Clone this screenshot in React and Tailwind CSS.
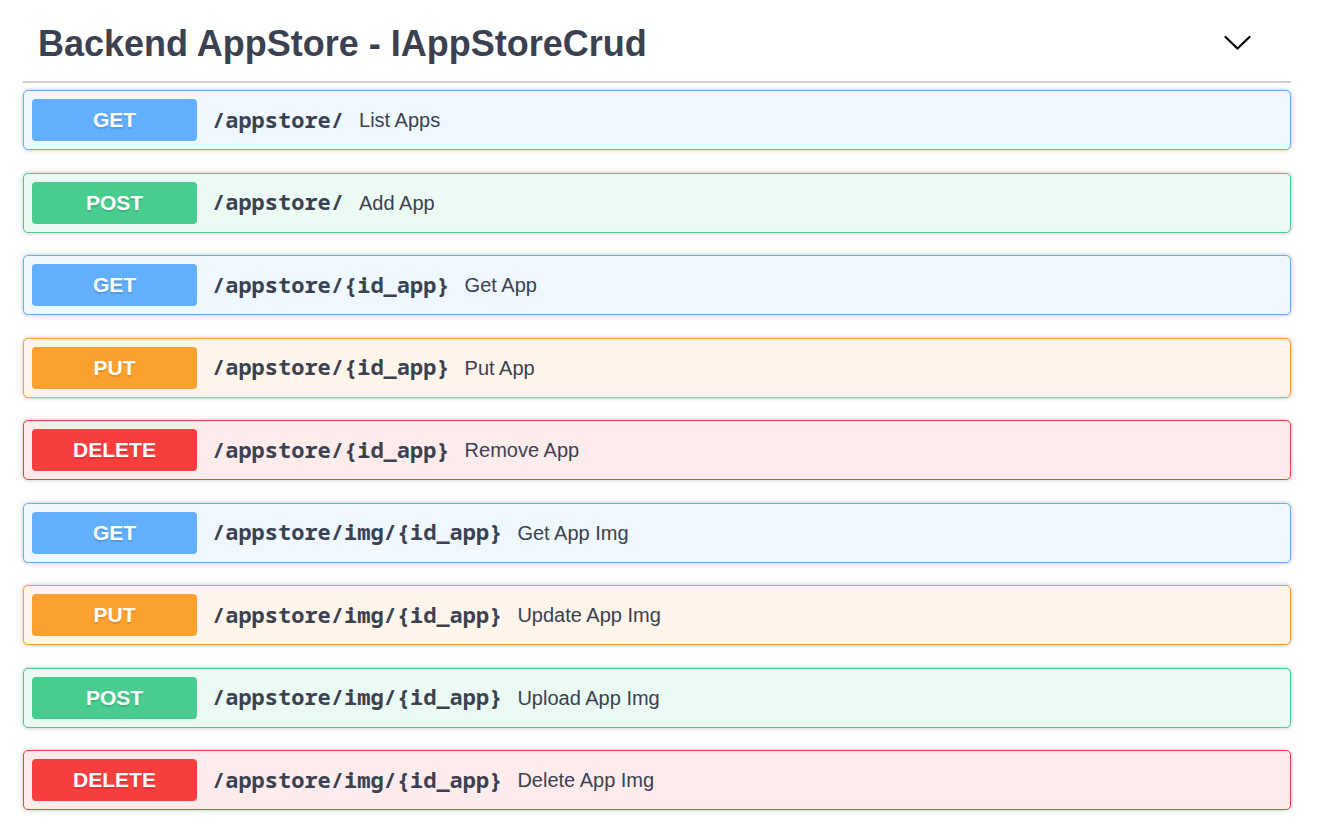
const METHODS = {
  GET: { row: "border-[#61affe] bg-[#eff7ff]", badge: "bg-[#61affe]" },
  POST: { row: "border-[#49cc90] bg-[#ebfaf3]", badge: "bg-[#49cc90]" },
  PUT: { row: "border-[#fca130] bg-[#fff5ea]", badge: "bg-[#fca130]" },
  DELETE: { row: "border-[#f93e3e] bg-[#feebeb]", badge: "bg-[#f93e3e]" },
};

const OPERATIONS = [
  ["GET", "/appstore/", "List Apps"],
  ["POST", "/appstore/", "Add App"],
  ["GET", "/appstore/{id_app}", "Get App"],
  ["PUT", "/appstore/{id_app}", "Put App"],
  ["DELETE", "/appstore/{id_app}", "Remove App"],
  ["GET", "/appstore/img/{id_app}", "Get App Img"],
  ["PUT", "/appstore/img/{id_app}", "Update App Img"],
  ["POST", "/appstore/img/{id_app}", "Upload App Img"],
  ["DELETE", "/appstore/img/{id_app}", "Delete App Img"],
];

function Operation({ method, path, summary }) {
  const style = METHODS[method];
  return (
    <li>
      <button
        type="button"
        className={`flex h-[60px] w-full items-center rounded-[5px] border px-2 text-left shadow-[0_0_4px_rgba(0,0,0,0.25)] ${style.row}`}
      >
        <span
          className={`flex h-[42px] w-[165px] shrink-0 items-center justify-center rounded-[4px] text-[21px] font-bold text-white [text-shadow:0_2px_1px_rgba(0,0,0,0.12)] ${style.badge}`}
        >
          {method}
        </span>
        <span className="px-[15px] pb-[2px] font-['Noto_Sans_Mono','DejaVu_Sans_Mono',monospace] text-[22px] font-bold">
          {path}
        </span>
        <span className="text-[20px]">{summary}</span>
      </button>
    </li>
  );
}

export default function App() {
  return (
    <main className="flex min-h-screen flex-col bg-white pr-[31px] pb-[26px] pl-[23px] font-['Liberation_Sans',Arial,sans-serif] text-[#3b4151]">
      <section className="flex grow flex-col">
        <h2 className="border-b-2 border-[#cfd0d4] pt-1">
          <button
            type="button"
            className="flex h-[77px] w-full items-center justify-between pr-10 pl-[15px] text-left text-[36px] font-bold"
          >
            <span className="pt-[2px]">Backend AppStore - IAppStoreCrud</span>
            <svg
              aria-hidden="true"
              className="h-7 w-7 text-black"
              viewBox="0 0 28 28"
              fill="none"
              stroke="currentColor"
              strokeWidth="2.2"
              strokeLinecap="round"
            >
              <path d="M2.5 8 L14.5 19.5 L26.5 8" />
            </svg>
          </button>
        </h2>
        <ul className="flex grow flex-col justify-between gap-5 pt-[7px]">
          {OPERATIONS.map(([method, path, summary]) => (
            <Operation key={`${method} ${path}`} method={method} path={path} summary={summary} />
          ))}
        </ul>
      </section>
    </main>
  );
}
